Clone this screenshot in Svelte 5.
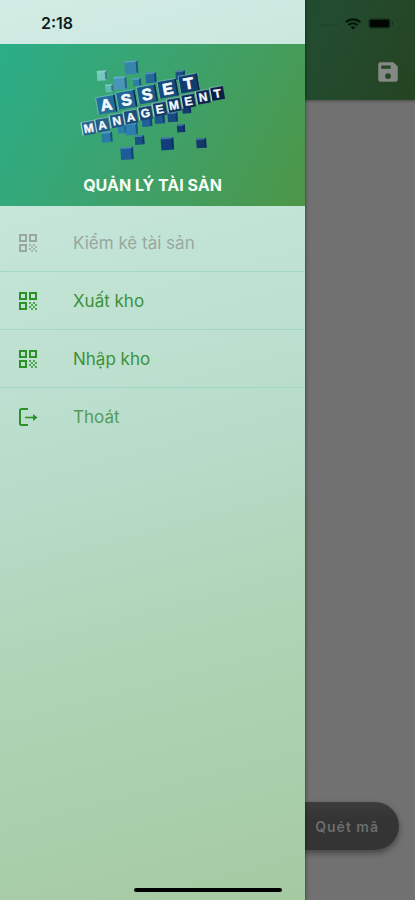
<script>
  const items = [
    { label: 'Kiểm kê tài sản', icon: 'qr', current: true },
    { label: 'Xuất kho', icon: 'qr' },
    { label: 'Nhập kho', icon: 'qr' },
    { label: 'Thoát', icon: 'exit', soft: true }
  ];

  // Logo cubes: centre x, centre y, size, colour
  const cubes = [
    [95, 78, 30, '#74c8bd'], [183, 53, 40, '#3685ad'], [150, 100, 38, '#4796b8'],
    [117, 116, 24, '#5dbbb0'], [200, 97, 24, '#2f7fa8'], [242, 84, 32, '#236a9b'],
    [330, 76, 28, '#1b4f80'], [110, 262, 32, '#2a7ba6'], [156, 238, 26, '#2c80a8'],
    [184, 238, 36, '#2d7fae'], [230, 216, 30, '#215f98'], [268, 207, 30, '#1d5690'],
    [307, 202, 30, '#174a80'], [349, 178, 26, '#143a70'], [208, 271, 28, '#174f86'],
    [170, 311, 38, '#1d5c96'], [291, 282, 38, '#123f7c'], [332, 236, 24, '#123a70'],
    [393, 280, 30, '#15386c']
  ];
  const asset = [
    ['A', 108, 165, '#226f9c'], ['S', 168, 150, '#1f6694'], ['S', 230, 134, '#1b5988'],
    ['E', 292, 117, '#164b7c'], ['T', 355, 101, '#123c6c']
  ];
  const management = [
    ['M', 55, 235, '#28668f'], ['A', 96, 226, '#245d88'], ['N', 139, 213, '#205580'],
    ['A', 181, 202, '#1c4c78'], ['G', 225, 190, '#184470'], ['E', 268, 178, '#153c68'],
    ['M', 311, 166, '#12345f'], ['E', 354, 154, '#102d57'], ['N', 398, 142, '#0e264e'],
    ['T', 441, 131, '#0b1f44']
  ];
</script>

<div class="screen">
  <main class="page">
    <header class="appbar">
      <div class="status">
        <svg width="18" height="4" viewBox="0 0 18 4" aria-hidden="true">
          <path d="M1 2h3M5.500 2h3M10 2h3M14.500 2h3" transform="translate(0 1)" stroke="#193d27" stroke-width="1" />
        </svg>
        <svg width="16" height="12" viewBox="0 0 16 12" aria-hidden="true" fill="none" stroke="#06140b" stroke-width="2.200">
          <path d="M.8 4.300a10.200 10.200 0 0 1 14.400 0" />
          <path d="M3.500 7.100a6.400 6.400 0 0 1 9 0" />
          <path d="M5.700 9.300 8 11.800l2.300-2.500a3.300 3.300 0 0 0-4.600 0z" fill="#06140b" stroke="none" />
        </svg>
        <svg width="26" height="12" viewBox="0 0 26 12" aria-hidden="true">
          <rect x=".5" y=".5" width="22" height="10" rx="2.500" fill="none" stroke="#163b20" />
          <rect x="1.500" y="1.500" width="20" height="8" rx="1.500" fill="#020603" />
          <path d="M24 3.500c1.500.5 1.500 3.500 0 4z" fill="#123018" />
        </svg>
      </div>
      <div class="toolbar">
        <button class="save" aria-label="Lưu">
          <svg width="26" height="26" viewBox="0 0 24 24" fill="#858985" aria-hidden="true">
            <path d="M17 3H5a2 2 0 0 0-2 2v14c0 1.100.89 2 2 2h14c1.100 0 2-.9 2-2V7l-4-4zm-5 15.500a2.700 2.700 0 1 1 0-5.400 2.700 2.700 0 0 1 0 5.400zm2.500-9.500H5.800V6h8.700v3z" />
          </svg>
        </button>
      </div>
    </header>
    <div class="content">
      <button class="scan">Quét mã</button>
    </div>
  </main>

  <aside class="drawer">
    <div class="time">2:18</div>
    <div class="brand">
      <svg class="logo" width="170" height="120" viewBox="-7 1 510 360" role="img" aria-label="Asset Management">
        {#each cubes as [x, y, s, c]}
          <g transform="translate({x} {y}) rotate(-4)">
            <rect x={-s / 2} y={-s / 2} width={s} height={s} fill={c} />
            <path d="M{-s / 2} {-s / 2}h{s}l-5 5h{-s + 5}z" fill="#a6e0ec" opacity=".35" />
            <path d="M{s / 2} {-s / 2}v{s}l-6-5v{-s + 10}z" fill="#04204c" opacity=".45" />
          </g>
        {/each}
        {#each asset as [ch, x, y, c]}
          <g transform="translate({x} {y}) rotate(-10)">
            <rect x="-28" y="-26" width="57" height="52" fill={c} />
            <path d="M-28 26v-52h56" fill="none" stroke="#8ccbd4" stroke-width="2.500" opacity=".7" />
            <path d="M27-25v50" stroke="#08264d" stroke-width="4" />
            <text class="tile big" y="17">{ch}</text>
          </g>
        {/each}
        {#each management as [ch, x, y, c]}
          <g transform="translate({x} {y}) rotate(-10)">
            <rect x="-20" y="-20" width="40" height="40" fill={c} />
            <path d="M-20 20v-40" stroke="#c8e6ec" stroke-width="3.500" opacity=".8" />
            <path d="M-20-20h40" stroke="#a3cfda" stroke-width="2.500" opacity=".7" />
            <text class="tile small" y="13">{ch}</text>
          </g>
        {/each}
      </svg>
      <h1>QUẢN LÝ TÀI SẢN</h1>
    </div>

    <nav>
      {#each items as item}
        <button class="item" class:current={item.current} class:soft={item.soft}>
          {#if item.icon === 'qr'}
            <svg width="24" height="24" viewBox="0 0 24 24" fill="currentColor" aria-hidden="true">
              <path fill-rule="evenodd" d="M3 3h8v8H3zM5 5v4h4V5zM13 3h8v8h-8zM15 5v4h4V5zM3 13h8v8H3zM5 15v4h4v-4z" />
              <path d="M13 13h2v2h-2zM15 15h2v2h-2zM17 13h2v2h-2zM19 15h2v2h-2zM13 17h2v2h-2zM15 19h2v2h-2zM17 17h2v2h-2zM19 19h2v2h-2z" opacity=".75" />
            </svg>
          {:else}
            <svg width="24" height="24" viewBox="0 0 24 24" fill="none" stroke="currentColor" stroke-width="2" aria-hidden="true">
              <path d="M12 4H5.500A1.500 1.500 0 0 0 4 5.500v13A1.500 1.500 0 0 0 5.500 20H12" />
              <path d="M9 12.500h9" stroke-width="1.600" />
              <path d="M17 9l4.500 3.500-4.500 3.500z" fill="currentColor" stroke="none" />
            </svg>
          {/if}
          <span>{item.label}</span>
        </button>
      {/each}
    </nav>
  </aside>
  <div class="home"></div>
</div>

<style>
  :global(body) {
    margin: 0;
  }
  .screen {
    position: relative;
    min-height: 100vh;
    display: flex;
    overflow: hidden;
    font-family: Inter, Roboto, "Liberation Sans", sans-serif;
  }
  button {
    border: 0;
    margin: 0;
    padding: 0;
    background: none;
    font: inherit;
    cursor: pointer;
  }
  svg {
    display: block;
    flex: none;
  }
  .page {
    flex: 1;
    display: flex;
    flex-direction: column;
    background: #717171;
  }
  .appbar {
    height: 100px;
    display: flex;
    flex-direction: column;
    background: linear-gradient(115deg, #134d3b 0%, #234b2f 75%, #254421 100%);
    box-shadow: 0 1px 3px #0005;
  }
  .status {
    height: 44px;
    padding: 3px 21px 0 0;
    box-sizing: border-box;
    display: flex;
    align-items: center;
    justify-content: flex-end;
    gap: 7px;
  }
  .toolbar {
    flex: 1;
    display: flex;
    align-items: center;
    justify-content: flex-end;
    padding-right: 14px;
  }
  .content {
    flex: 1;
    display: flex;
    align-items: flex-end;
    justify-content: flex-end;
    padding: 0 16px 50px;
  }
  .scan {
    height: 48px;
    padding: 0 20px 0 52px;
    border-radius: 24px;
    background: linear-gradient(#3d3d3d, #343434 35%);
    box-shadow: 0 3px 6px #0006;
    color: #6c6c6c;
    font-size: 14px;
    font-weight: 600;
    letter-spacing: 1px;
  }
  .drawer {
    position: absolute;
    inset: 0 auto 0 0;
    width: 73.5%;
    background: linear-gradient(165deg, #d3ece5 0%, #cbe8df 12%, #c2e4d6 28%, #b8dcca 50%, #afd5b8 68%, #a8cda9 90%, #a6c9a2 100%);
    box-shadow: 0 0 4px #0008;
  }
  .time {
    height: 44px;
    padding: 3px 0 0 41px;
    box-sizing: border-box;
    line-height: 41px;
    font-size: 16px;
    font-weight: 600;
    color: #101c19;
  }
  .brand {
    height: 162px;
    padding-top: 6px;
    box-sizing: border-box;
    display: flex;
    flex-direction: column;
    align-items: center;
    background: linear-gradient(118deg, #2bae88 0%, #3da26c 50%, #4d9647 100%);
  }
  h1 {
    margin: 4px 0 0;
    line-height: 22px;
    font-size: 16px;
    font-weight: 700;
    color: #f7fdf6;
  }
  .tile {
    font-family: "Liberation Sans", sans-serif;
    font-weight: 700;
    fill: #f6fbff;
    stroke: #f6fbff;
    text-anchor: middle;
  }
  .big {
    font-size: 48px;
    stroke-width: 2px;
  }
  .small {
    font-size: 36px;
    stroke-width: 1px;
  }
  nav {
    padding-top: 8px;
    display: flex;
    flex-direction: column;
  }
  .item {
    height: 58px;
    padding: 0 16px;
    display: flex;
    align-items: center;
    gap: 33px;
    border-bottom: 1px solid #a4d6c4;
    font-size: 17px;
    color: #3d9138;
    text-align: left;
  }
  .item:last-child {
    border-bottom: 0;
  }
  .item svg {
    color: #2c9127;
  }
  .item.soft {
    color: #559a57;
  }
  .item.current,
  .item.current svg {
    color: #98a8a0;
  }
  .home {
    position: absolute;
    bottom: 8px;
    left: 50%;
    width: 148px;
    height: 4px;
    margin-left: -74px;
    border-radius: 2px;
    background: #000;
  }
</style>
